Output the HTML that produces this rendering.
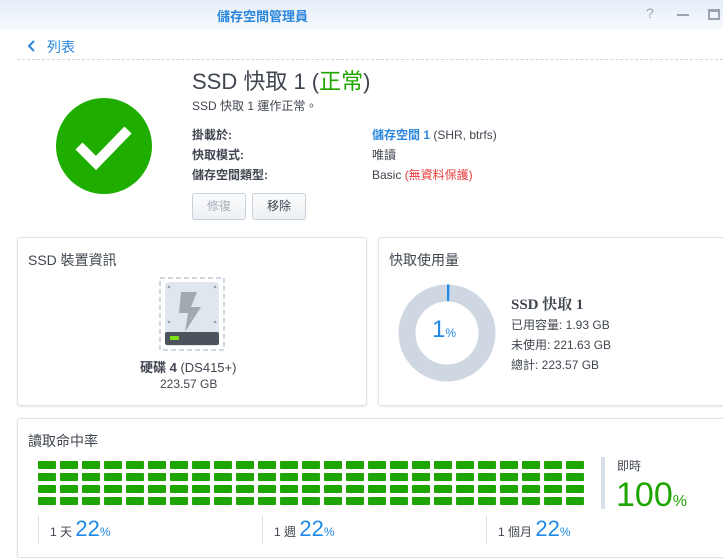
<!DOCTYPE html>
<html><head><meta charset="utf-8"><style>
*{margin:0;padding:0;box-sizing:border-box}
body{width:723px;height:552px;overflow:hidden;background:#fff;font-family:"Liberation Sans","Noto Sans CJK TC",sans-serif;color:#404650;position:relative;font-size:12px}
.a{position:absolute;white-space:nowrap}
.panel{position:absolute;border:1px solid #dfe3e8;border-radius:3px;box-shadow:0 1px 2px rgba(0,0,0,.08);background:#fff}
.btn{position:absolute;top:193px;height:27px;width:54px;border:1px solid #c8d0da;border-radius:3px;background:linear-gradient(#fafbfc,#eef1f4);text-align:center;line-height:25px;font-size:12px}
.cell{position:absolute;width:18px;height:8px;background:#1ea500;border-radius:1px}
</style></head><body>
<div class="a" style="left:0;top:0;width:723px;height:30px;background:linear-gradient(#e4edf7,#f7fafd)"></div>
<div class="a" style="left:217px;top:6px;font-size:13px;font-weight:bold;color:#2a86dc">儲存空間管理員</div>
<div class="a" style="left:646px;top:5px;font-size:14px;color:#9aa4b0">?</div>
<div class="a" style="left:677px;top:14px;width:12px;height:2px;background:#9aa4b0"></div>
<div class="a" style="left:708px;top:9px;width:12px;height:11px;border:2px solid #9aa4b0;border-top-width:3px"></div>

<svg class="a" style="left:27px;top:39px" width="10" height="14"><path d="M7 2 L2 7 L7 12" stroke="#2a86dc" stroke-width="2" fill="none"/></svg>
<div class="a" style="left:47px;top:37px;font-size:14px;color:#2a86dc">列表</div>
<div class="a" style="left:17px;top:59px;width:706px;border-top:1px dashed #cfd5dc"></div>

<svg class="a" style="left:56px;top:98px" width="96" height="96"><circle cx="48" cy="48" r="48" fill="#1fae00"/><path d="M23 48 L40 65 L72 32" stroke="#fff" stroke-width="10" fill="none"/></svg>
<div class="a" style="left:192px;top:69px;font-size:22px;line-height:26px;color:#404650">SSD 快取 1 (<span style="color:#1ea500">正常</span>)</div>
<div class="a" style="left:192px;top:97px;font-size:12px">SSD 快取 1 運作正常。</div>
<div class="a" style="left:192px;top:126px;font-weight:bold">掛載於:</div>
<div class="a" style="left:192px;top:146px;font-weight:bold">快取模式:</div>
<div class="a" style="left:192px;top:166px;font-weight:bold">儲存空間類型:</div>
<div class="a" style="left:372px;top:126px"><b style="color:#2a86dc">儲存空間 1</b> (SHR, btrfs)</div>
<div class="a" style="left:372px;top:146px">唯讀</div>
<div class="a" style="left:372px;top:166px">Basic <span style="color:#e83a3a">(無資料保護)</span></div>
<div class="btn" style="left:192px;color:#a8b0ba">修復</div>
<div class="btn" style="left:252px">移除</div>

<div class="panel" style="left:17px;top:237px;width:350px;height:169px"></div>
<div class="a" style="left:28px;top:250px;font-size:14px">SSD 裝置資訊</div>
<svg class="a" style="left:159px;top:277px" width="66" height="74"><rect x="1" y="1" width="64" height="72" fill="none" stroke="#cfd8e3" stroke-width="2" stroke-dasharray="5,3"/><rect x="6" y="5" width="54" height="64" rx="4" fill="#dfe6ee"/><circle cx="10" cy="10" r="1.3" fill="#9aa4b0"/><circle cx="56" cy="10" r="1.3" fill="#9aa4b0"/><circle cx="10" cy="45" r="1.3" fill="#9aa4b0"/><circle cx="56" cy="45" r="1.3" fill="#9aa4b0"/><path d="M22 15 L38 15 L32 30 L42 30 L26 55 L29 36 L20 36 Z" fill="#a2a9b1"/><rect x="6" y="55" width="54" height="13" rx="2" fill="#4b535c"/><rect x="11" y="59" width="9" height="4" fill="#7fe010"/></svg>
<div class="a" style="left:140px;top:357px;font-size:13px"><b>硬碟 4</b> (DS415+)</div>
<div class="a" style="left:160px;top:377px;font-size:12px">223.57 GB</div>

<div class="panel" style="left:378px;top:237px;width:350px;height:169px"></div>
<div class="a" style="left:389px;top:250px;font-size:14px">快取使用量</div>
<svg class="a" style="left:398px;top:284px" width="98" height="98"><circle cx="49" cy="49" r="40" fill="none" stroke="#cfd8e2" stroke-width="17"/><path d="M49 0.5 A48.5 48.5 0 0 1 51.5 0.6 L51.2 17.1 A32 32 0 0 0 49 17Z" fill="#1e8ae8"/></svg>
<div class="a" style="left:432px;top:316px;font-size:24px;color:#1e8ae8">1<span style="font-size:12px">%</span></div>
<div class="a" style="left:511px;top:293px;font-size:15px;font-weight:bold;font-family:'Liberation Serif','Noto Serif CJK SC',serif">SSD 快取 1</div>
<div class="a" style="left:511px;top:316px">已用容量: 1.93 GB</div>
<div class="a" style="left:511px;top:336px">未使用: 221.63 GB</div>
<div class="a" style="left:511px;top:356px">總計: 223.57 GB</div>

<div class="panel" style="left:17px;top:418px;width:715px;height:140px"></div>
<div class="a" style="left:28px;top:431px;font-size:14px">讀取命中率</div>
<div id="g"></div>
<div class="a" style="left:601px;top:457px;width:4px;height:52px;background:#d6dee8"></div>
<div class="a" style="left:617px;top:457px;font-size:12px">即時</div>
<div class="a" style="left:616px;top:476px;font-size:34px;color:#1ea500">100<span style="font-size:16px">%</span></div>
<div class="a" style="left:38px;top:516px;height:28px;border-left:1px solid #d6dee8"></div>
<div class="a" style="left:262px;top:516px;height:28px;border-left:1px solid #d6dee8"></div>
<div class="a" style="left:486px;top:516px;height:28px;border-left:1px solid #d6dee8"></div>
<div class="a" style="left:50px;top:515px;font-size:12px;line-height:28px">1 天 <span style="font-size:22px;color:#1e8ae8">22</span><span style="color:#1e8ae8">%</span></div>
<div class="a" style="left:274px;top:515px;font-size:12px;line-height:28px">1 週 <span style="font-size:22px;color:#1e8ae8">22</span><span style="color:#1e8ae8">%</span></div>
<div class="a" style="left:498px;top:515px;font-size:12px;line-height:28px">1 個月 <span style="font-size:22px;color:#1e8ae8">22</span><span style="color:#1e8ae8">%</span></div>
<script>
var h='';for(var r=0;r<4;r++)for(var c=0;c<25;c++)h+='<div class="cell" style="left:'+(38+c*22)+'px;top:'+(461+r*12)+'px"></div>';
document.getElementById('g').innerHTML=h;
</script>
</body></html>
